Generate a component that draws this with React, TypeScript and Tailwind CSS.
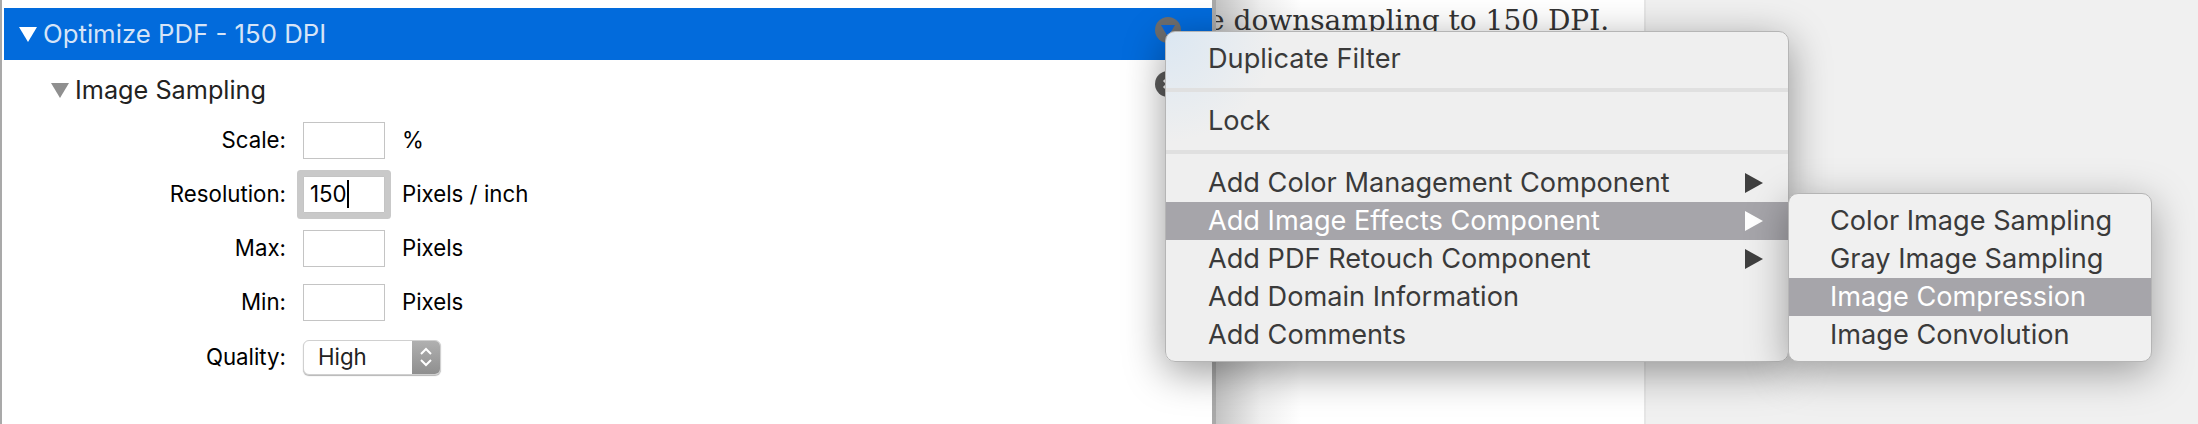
const sf = "font-['Inter','Liberation_Sans',sans-serif]";

function Field({ label, value, unit, focused }: { label: string; value?: string; unit: string; focused?: boolean }) {
  return (
    <div className="flex h-[38px] items-center">
      <span className="w-[282px] text-right text-[22.25px] text-black">{label}</span>
      <div
        className={`ml-[17px] flex h-[37px] w-[82px] items-center border border-[#c4c4c4] bg-white pl-[6px] text-[22.25px] text-black ${
          focused ? "rounded-[1px] shadow-[0_0_0_6px_#c9c9c9]" : ""
        }`}
      >
        {value}
        {focused ? <span className="h-[28px] w-[2px] bg-black" /> : null}
      </div>
      <span className="ml-[17px] text-[22.25px] text-black">{unit}</span>
    </div>
  );
}

function Arrow({ light }: { light?: boolean }) {
  return (
    <svg width="18" height="20" viewBox="0 0 18 20" className="shrink-0">
      <path d="M0 0 L18 10 L0 20 Z" fill={light ? "#ffffff" : "#3f3f3f"} />
    </svg>
  );
}

function MenuRow({ label, active, arrow, wide }: { label: string; active?: boolean; arrow?: boolean; wide?: boolean }) {
  return (
    <div
      className={`flex h-[38px] items-center justify-between text-[27.15px] ${
        active ? "bg-[#a6a5aa] text-white" : "text-[#3a3a3a]"
      } ${wide ? "pl-[41px]" : "pl-[42px]"}`}
    >
      <span>{label}</span>
      {arrow ? <Arrow light={active} /> : null}
    </div>
  );
}

export default function App() {
  return (
    <div className={`relative flex h-[424px] w-[2198px] overflow-hidden bg-white ${sf}`}>
      {/* filter panel */}
      <div className="h-full w-[1216px] shrink-0 border-r-[4px] border-l-[2px] border-[#a9a9a9] bg-white pt-[8px] pl-[2px]">
        <div className="flex h-[52px] items-center bg-[#026bdc] pl-[15px] text-[25.75px] text-[#d6e4f7]">
          <svg width="18" height="15" viewBox="0 0 18 15" className="mr-[6px] shrink-0">
            <path d="M0 0 H18 L9 15 Z" fill="#ffffff" />
          </svg>
          Optimize PDF - 150 DPI
        </div>
        <div className="flex h-[61px] items-center pl-[47px] text-[25.25px] text-[#222222]">
          <svg width="18" height="15" viewBox="0 0 18 15" className="mr-[6px] shrink-0">
            <path d="M0 0 H18 L9 15 Z" fill="#8f8f8f" />
          </svg>
          Image Sampling
        </div>
        <div className="flex flex-col gap-[16px]">
          <Field label="Scale:" unit="%" />
          <Field label="Resolution:" value="150" unit="Pixels / inch" focused />
          <Field label="Max:" unit="Pixels" />
          <Field label="Min:" unit="Pixels" />
          <div className="mt-[1px] flex h-[38px] items-center">
            <span className="w-[282px] text-right text-[22.25px] text-black">Quality:</span>
            <div className="ml-[17px] flex h-[35px] w-[138px] items-center overflow-hidden rounded-[6px] border border-[#d0d0d0] bg-white shadow-[0_1px_1px_#b5b5b5]">
              <span className="flex-1 pl-[14px] text-[22.25px] text-[#222222]">High</span>
              <div className="flex h-full w-[28px] items-center justify-center bg-gradient-to-b from-[#b0b0b0] to-[#8f8f8f]">
                <svg width="14" height="24" viewBox="0 0 14 24" fill="none" stroke="#ffffff" strokeWidth="2">
                  <path d="M2 9 L7 4 L12 9" />
                  <path d="M2 15 L7 20 L12 15" />
                </svg>
              </div>
            </div>
          </div>
        </div>
      </div>

      {/* page preview */}
      <div className="h-full w-[430px] shrink-0 overflow-hidden border-r-[2px] border-[#e6e6e6] bg-[linear-gradient(90deg,#c4c4c4,#efefef_45px,#ffffff_85px)] pt-[4px] font-['DejaVu_Serif',serif] text-[28px] leading-[34px] whitespace-nowrap text-[#333333]">
        <span className="-ml-[8px] block">e downsampling to 150 DPI.</span>
      </div>
      <div className="h-full flex-1 bg-[#f0f0f0]" />

      {/* buttons half covered by the menu */}
      <div className="absolute top-[17px] left-[1155px] flex h-[26px] w-[26px] items-center justify-center rounded-full bg-[#6e6e6e]">
        <svg width="14" height="13" viewBox="0 0 14 13">
          <path d="M0 1 H14 L7 13 Z" fill="#0a66d8" />
        </svg>
      </div>
      <div className="absolute top-[71px] left-[1155px] flex h-[26px] w-[26px] items-center justify-center rounded-full bg-[#5d5d5d]">
        <svg width="12" height="12" viewBox="0 0 12 12" stroke="#ffffff" strokeWidth="3">
          <path d="M2 2 L10 10 M10 2 L2 10" />
        </svg>
      </div>

      {/* context menu */}
      <div className="absolute top-[31px] left-[1165px] h-[331px] w-[624px] rounded-[10px] border border-[#b5b5b5] bg-[radial-gradient(circle_at_0_0,#dbe7f2_0,#efefef_110px)] pt-[8px] shadow-[0_10px_40px_rgba(0,0,0,0.4)]">
        <MenuRow label="Duplicate Filter" />
        <div className="my-[10px] h-[4px] bg-[#e0e0e0]" />
        <MenuRow label="Lock" />
        <div className="my-[10px] h-[4px] bg-[#e0e0e0]" />
        <div className="flex flex-col [&>div]:pr-[25px]">
          <MenuRow label="Add Color Management Component" arrow />
          <MenuRow label="Add Image Effects Component" arrow active />
          <MenuRow label="Add PDF Retouch Component" arrow />
          <MenuRow label="Add Domain Information" />
          <MenuRow label="Add Comments" />
        </div>
      </div>

      {/* submenu */}
      <div className="absolute top-[193px] left-[1788px] h-[169px] w-[364px] rounded-[10px] border border-[#b5b5b5] bg-[#f0f0f0] pt-[8px] shadow-[0_10px_40px_rgba(0,0,0,0.35)]">
        <MenuRow label="Color Image Sampling" wide />
        <MenuRow label="Gray Image Sampling" wide />
        <MenuRow label="Image Compression" active wide />
        <MenuRow label="Image Convolution" wide />
      </div>
    </div>
  );
}
